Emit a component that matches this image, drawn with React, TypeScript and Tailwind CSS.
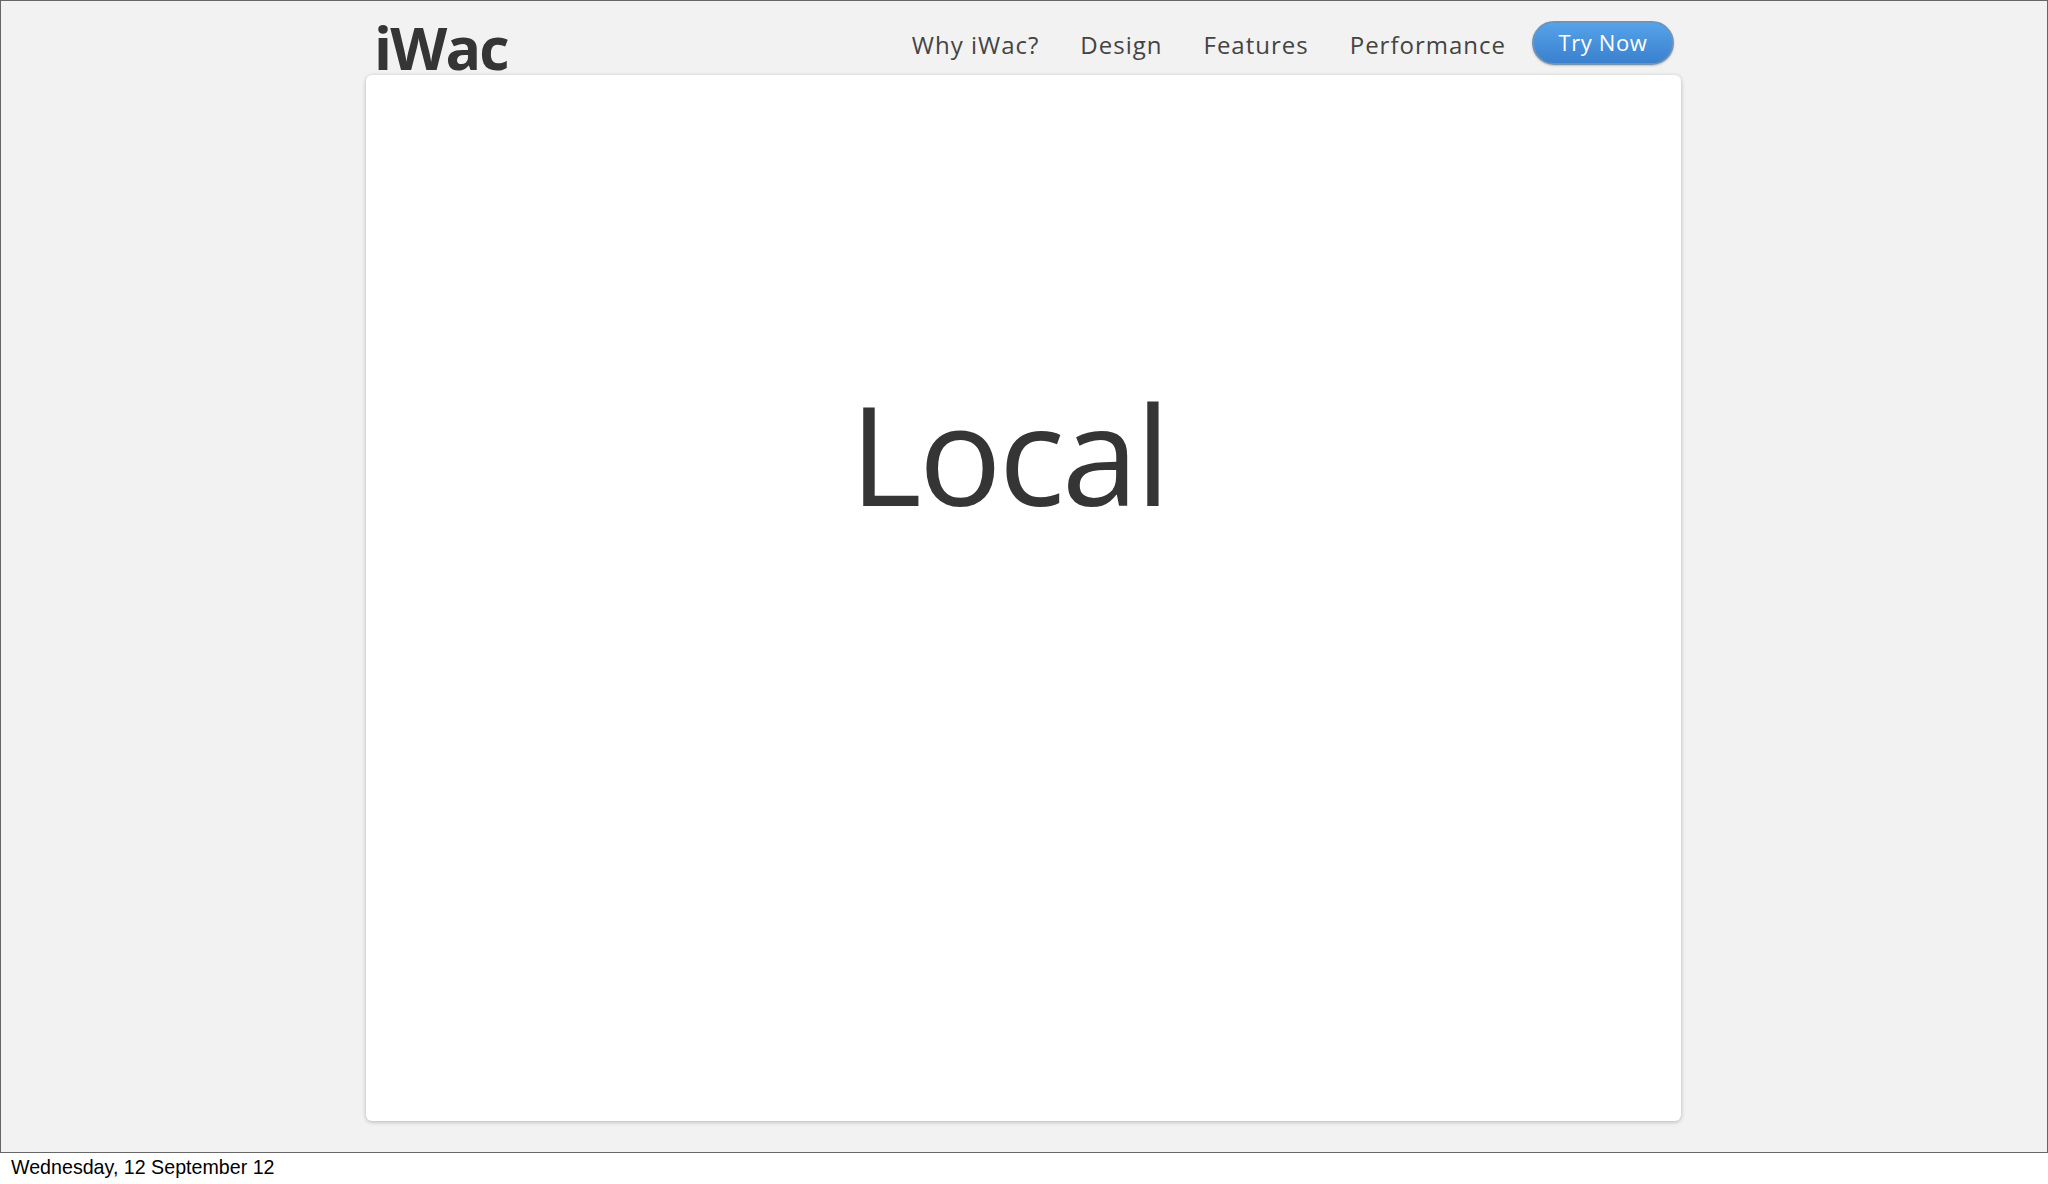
import React from 'react';

const navItems = ['Why iWac?', 'Design', 'Features', 'Performance'];

const App: React.FC = () => {
  return (
    <div className="w-[2048px] h-[1184px] bg-white overflow-hidden font-['Liberation_Sans',sans-serif]">
      <div className="h-[1153px] bg-[#f3f2f2] border border-[#666666] pt-[20px] font-['Open_Sans',sans-serif] text-[#353535]">
        <div className="w-[1315px] ml-[365px] h-[54px] flex items-start justify-between pl-[8px] pr-[7px]">
          <h1 className="text-[59px] leading-[52px] font-bold tracking-[-1.8px]">iWac</h1>
          <div className="flex items-start">
            <nav className="flex items-center gap-[41px] mt-[8px] text-[24px] leading-[32px] text-[#444444] tracking-[1px]">
              {navItems.map((item) => (
                <a key={item} className="whitespace-nowrap">{item}</a>
              ))}
            </nav>
            <button className="ml-[26px] w-[142px] h-[44px] rounded-full bg-gradient-to-b from-[#55a3ea] to-[#3b80cd] border-2 border-[#6f94ba] text-white text-[22px] leading-[36px] tracking-[0.6px] shadow-[0_1px_2px_rgba(0,0,0,0.2)]">
              <span className="block -mt-[2px]">Try Now</span>
            </button>
          </div>
        </div>
        <div className="w-[1315px] ml-[365px] h-[1046px] bg-white rounded-[6px] shadow-[0_1px_4px_rgba(0,0,0,0.25)] flex justify-center pt-[293px]">
          <h2 className="text-[138px] leading-[168px] tracking-[-3px] -ml-[30px]">Local</h2>
        </div>
      </div>
      <p className="pl-[11px] pt-[2px] text-[19.65px] leading-[24px] text-black">Wednesday, 12 September 12</p>
    </div>
  );
};

export default App;
